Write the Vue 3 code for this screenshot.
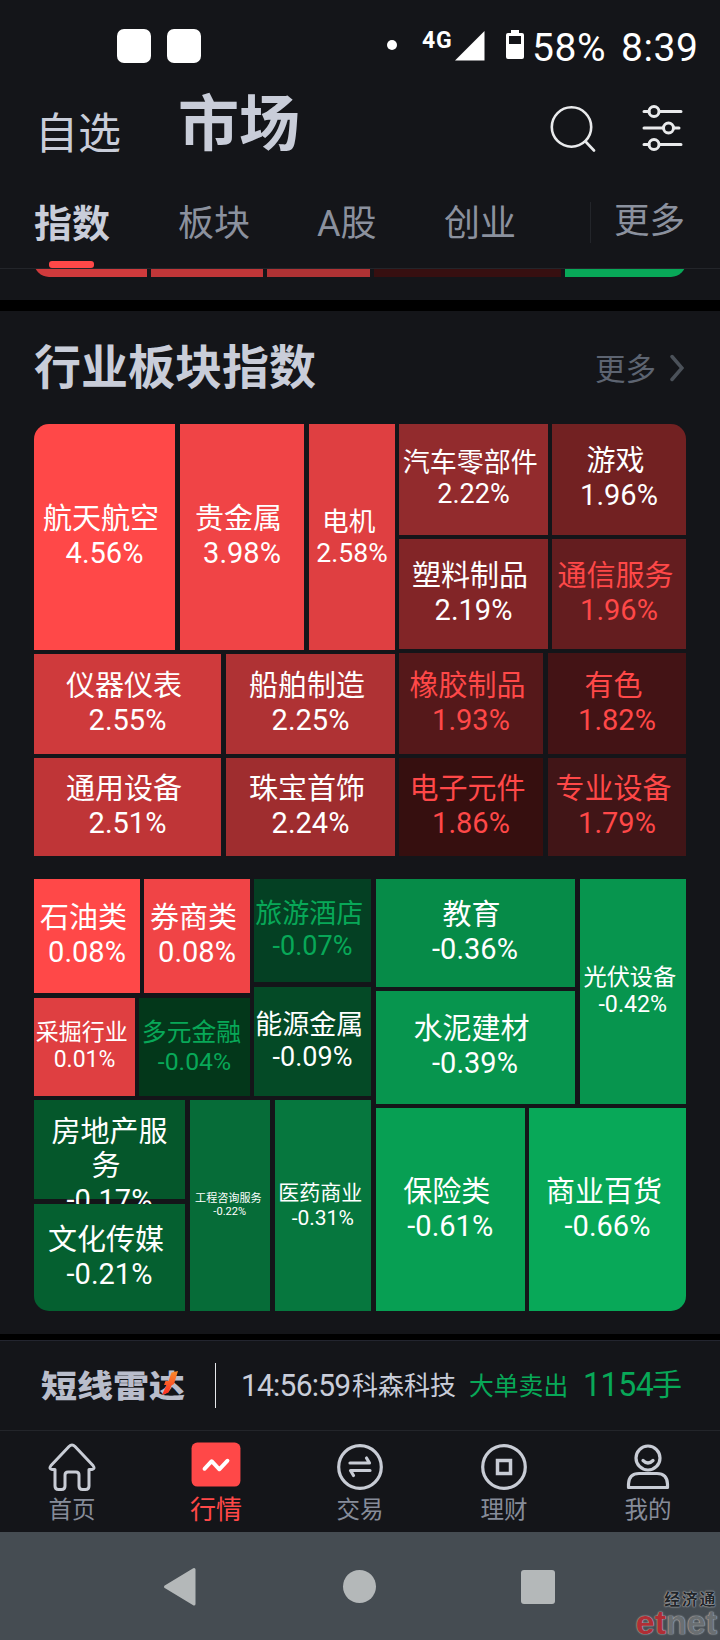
<template>
  <div class="screen">
    <div class="status">
      <span class="notice"></span>
      <span class="notice"></span>
      <span class="dot"></span>
      <span class="net">4G</span>
      <svg class="signal" width="30" height="30" viewBox="0 0 30 30">
        <path d="M29.500 0V29.500H0z" fill="#fff" />
      </svg>
      <svg class="battery" width="18" height="30" viewBox="0 0 18 30">
        <path
          fill="#fff"
          fill-rule="evenodd"
          d="M5 0h8v3h3a2 2 0 0 1 2 2v22a2 2 0 0 1-2 2H2a2 2 0 0 1-2-2V5a2 2 0 0 1 2-2h3zM3 6v8h12V6z"
        />
      </svg>
      <span class="power">58%</span>
      <span class="clock">8:39</span>
    </div>

    <header class="header">
      <span class="page">自选</span>
      <span class="page page-active">市场</span>
      <svg class="search" width="48" height="48" viewBox="0 0 48 48">
        <g fill="none" stroke="#e9eaec" stroke-width="2.600" stroke-linecap="round">
          <circle cx="22.500" cy="23" r="19.700" />
          <path d="M36.500 37.500L45 46.500" />
        </g>
      </svg>
      <svg class="filter" width="42" height="48" viewBox="0 0 42 48">
        <g fill="none" stroke="#e9eaec" stroke-width="3" stroke-linecap="round">
          <path d="M2 7.500h5M18 7.500h21M2 24h19.500M32.500 24h4.500M2 40.500h5M18 40.500h21" />
          <circle cx="12" cy="7.500" r="5" />
          <circle cx="26.500" cy="24" r="5" />
          <circle cx="12" cy="40.500" r="5" />
        </g>
      </svg>
    </header>

    <nav class="tabs">
      <span class="tab tab-active">指数</span>
      <span class="tab">板块</span>
      <span class="tab">A股</span>
      <span class="tab">创业</span>
      <span class="tab tab-more">更多</span>
    </nav>

    <div class="strip">
      <div class="strip-inner">
        <span v-for="(s, i) in strip" :key="i" :style="{ width: s.w + 'px', background: s.bg }"></span>
      </div>
    </div>

    <section class="sector">
      <div class="sector-head">
        <h2>行业板块指数</h2>
        <span class="more">更多</span>
        <svg width="14" height="28" viewBox="0 0 14 28">
          <path d="M2 2.500L12 14L2 25.500" fill="none" stroke="#4b5159" stroke-width="3.500" stroke-linecap="round" />
        </svg>
      </div>
      <TreeNode class="map map-up" :node="rising" />
      <TreeNode class="map map-down" :node="falling" />
    </section>

    <div class="radar">
      <div class="radar-logo">
        <span>短线雷达</span>
        <svg width="18" height="25" viewBox="0 0 18 25">
          <defs>
            <linearGradient id="flash" x1="0" y1="0" x2="0" y2="1">
              <stop offset="0" stop-color="#f98d2b" />
              <stop offset="1" stop-color="#ff2a24" />
            </linearGradient>
          </defs>
          <path d="M10.500 1.500L17 0L13 13L10.500 14.500L7.500 21.500L1 24L5.500 14H3L4.500 10H7.500z" fill="url(#flash)" />
        </svg>
      </div>
      <span class="radar-line"></span>
      <span class="radar-time">14:56:59</span>
      <span class="radar-stock">科森科技</span>
      <span class="radar-type">大单卖出</span>
      <span class="radar-num">1154</span>
      <span class="radar-unit">手</span>
    </div>

    <nav class="tabbar">
      <div class="item">
        <svg width="48" height="48" viewBox="0 0 48 48">
          <path
            d="M21 3.500Q24 .5 27 3.500L45 22.500Q47.500 26 44 26.500H41V43Q41 46.500 37.500 46.500H34.500Q31 46.500 31 43V32Q31 29 28 29H20Q17 29 17 32V43Q17 46.500 13.500 46.500H10.500Q7 46.500 7 43V26.500H4Q.5 26 3 22.500z"
            fill="none"
            stroke="#c8ccd5"
            stroke-width="3"
            stroke-linejoin="round"
          />
        </svg>
        <span>首页</span>
      </div>
      <div class="item item-active">
        <svg width="52" height="48" viewBox="0 0 52 48">
          <rect x=".5" y="0.500" width="51" height="46" rx="6" fill="#ff4848" />
          <path d="M14 28L21.500 20L29.500 28.500L38 19.500" fill="none" stroke="#fff" stroke-width="4" stroke-linecap="round" stroke-linejoin="round" />
        </svg>
        <span>行情</span>
      </div>
      <div class="item">
        <svg width="48" height="48" viewBox="0 0 48 48">
          <g fill="none" stroke="#c8ccd5" stroke-width="3.200">
            <circle cx="24" cy="24" r="21.300" />
            <path d="M14 20H33.500L30.500 15M34 27.500H14.500L17.500 32.500" stroke-linecap="round" stroke-linejoin="round" />
          </g>
        </svg>
        <span>交易</span>
      </div>
      <div class="item">
        <svg width="48" height="48" viewBox="0 0 48 48">
          <g fill="none" stroke="#c8ccd5" stroke-width="3.200">
            <circle cx="24" cy="24" r="21.300" />
            <rect x="17.500" y="17.500" width="13" height="13" stroke-width="3.500" />
          </g>
        </svg>
        <span>理财</span>
      </div>
      <div class="item">
        <svg width="48" height="48" viewBox="0 0 48 48">
          <g fill="none" stroke="#c8ccd5" stroke-width="3.200">
            <circle cx="24" cy="15" r="12" />
            <path d="M19 17.500Q24 22.500 29 17.500" stroke-linecap="round" />
            <path d="M4.500 44.500V41Q5 30.500 15 30.500H33Q43 30.500 43.500 41V44.500z" stroke-linejoin="round" />
          </g>
        </svg>
        <span>我的</span>
      </div>
    </nav>

    <footer class="sysbar">
      <svg width="34" height="40" viewBox="0 0 34 40">
        <path d="M31 2.500V37L2.500 19.700z" fill="#b4b8b9" stroke="#b4b8b9" stroke-width="3" stroke-linejoin="round" />
      </svg>
      <span class="sys-home"></span>
      <span class="sys-recent"></span>
      <div class="mark">
        <div class="mark-cn">经济通</div>
        <div class="mark-en"><b>et</b>net</div>
      </div>
    </footer>
  </div>
</template>

<script setup>
import { h } from 'vue'

const strip = [
  { w: 113, bg: '#cf3a3c' },
  { w: 112, bg: '#c03638' },
  { w: 103, bg: '#af3234' },
  { w: 187, bg: '#370f10' },
  { w: 121, bg: '#08a858' },
]

const tile = (size, name, rate, bg, font = 29, color = '#fff') => ({ size, name, rate, bg, font, color })
const row = (size, ...items) => ({ size, dir: 'row', items })
const col = (size, ...items) => ({ size, dir: 'column', items })

const RED = '#ff4848'
const GREEN = '#08a858'

const rising = row(
  432,
  col(
    361,
    row(226, tile(141, '航天航空', '4.56%', '#ff4848'), tile(124.5, '贵金属', '3.98%', '#f04446'), tile(86, '电机', '2.58%', '#df3f41', 26.6)),
    row(99.5, tile(187, '仪器仪表', '2.55%', '#cf3a3c'), tile(169, '船舶制造', '2.25%', '#af3234')),
    row(98, tile(187, '通用设备', '2.51%', '#bf3537'), tile(169, '珠宝首饰', '2.24%', '#9f2d2f')),
  ),
  col(
    287,
    row(110.5, tile(149, '汽车零部件', '2.22%', '#922b2d', 27), tile(134, '游戏', '1.96%', '#722122')),
    row(110, tile(149, '塑料制品', '2.19%', '#822527'), tile(134, '通信服务', '1.96%', '#641d1f', 29, RED)),
    row(100.5, tile(144, '橡胶制品', '1.93%', '#55181a', 29, RED), tile(138, '有色', '1.82%', '#431315', 29, RED)),
    row(98, tile(144, '电子元件', '1.86%', '#360f0f', 29, RED), tile(138, '专业设备', '1.79%', '#411517', 29, RED)),
  ),
)

const falling = row(
  432,
  col(
    337,
    row(
      217,
      col(
        216,
        row(114, tile(106, '石油类', '0.08%', '#ff4848'), tile(106, '券商类', '0.08%', '#f04446')),
        row(98, tile(101, '采掘行业', '0.01%', '#df3f41', 23), tile(111, '多元金融', '-0.04%', '#03371a', 24.8, GREEN)),
      ),
      col(117, tile(103, '旅游酒店', '-0.07%', '#044023', 27, GREEN), tile(109, '能源金属', '-0.09%', '#044a26', 27)),
    ),
    row(
      211,
      col(151, tile(99, '房地产服务', '-0.17%', '#05572b'), tile(107, '文化传媒', '-0.21%', '#056030')),
      tile(80.5, '工程咨询服务', '-0.22%', '#066c38', 11.1),
      tile(96.5, '医药商业', '-0.31%', '#06773e', 21),
    ),
  ),
  col(
    310.5,
    row(
      224.5,
      col(199, tile(107.5, '教育', '-0.36%', '#068b48'), tile(112.5, '水泥建材', '-0.39%', '#07954e')),
      tile(106.5, '光伏设备', '-0.42%', '#07954e', 23.2),
    ),
    row(203, tile(149.5, '保险类', '-0.61%', '#079f53'), tile(157, '商业百货', '-0.66%', '#08a858')),
  ),
)

// a node is either a tile or a row/column of further nodes
const TreeNode = ({ node }) => {
  if (node.items) {
    return h(
      'div',
      { class: 'tree-group', style: { flexBasis: node.size + 'px', flexDirection: node.dir } },
      node.items.map((item) => h(TreeNode, { node: item })),
    )
  }
  return h('div', { class: 'tree-tile', style: { flexBasis: node.size + 'px', background: node.bg } }, [
    h('div', { class: 'tree-label', style: { fontSize: node.font + 'px', color: node.color } }, [
      h('div', node.name + '\u00a0'),
      h('div', node.rate),
    ]),
  ])
}
TreeNode.props = ['node']
</script>

<style>
body {
  background: #141519;
}

.tree-group {
  display: flex;
  flex-grow: 0;
  flex-shrink: 0;
  justify-content: space-between;
}

.tree-tile {
  display: flex;
  flex-grow: 0;
  flex-shrink: 0;
  align-items: center;
  justify-content: center;
}

.tree-label {
  width: 100%;
  height: 2.33em;
  line-height: 1.17;
  text-align: center;
}
</style>

<style scoped>
.screen {
  width: 720px;
  height: 1640px;
  overflow: hidden;
  display: flex;
  flex-direction: column;
  background: #141519;
  color: #c9cdd9;
  font-family: Roboto, 'Noto Sans CJK SC', sans-serif;
}

.status {
  display: flex;
  align-items: flex-start;
  height: 88px;
  padding-left: 117px;
  box-sizing: border-box;
  color: #fff;
  white-space: nowrap;
}

.notice {
  width: 34px;
  height: 34px;
  margin: 29px 16px 0 0;
  border-radius: 7px;
  background: #fff;
}

.dot {
  width: 10px;
  height: 10px;
  margin: 40px 0 0 170px;
  border-radius: 50%;
  background: #fff;
}

.net {
  width: 33px;
  margin: 27px 0 0 25px;
  font-size: 23px;
  line-height: 28px;
  font-weight: 700;
  letter-spacing: 0.8px;
}

.signal {
  margin-top: 31px;
}

.battery {
  margin: 30px 0 0 21px;
}

.power,
.clock {
  margin-top: 25px;
  font-size: 39px;
  line-height: 46px;
  letter-spacing: 0.6px;
}

.power {
  width: 89px;
  margin-left: 8px;
}

.header {
  display: flex;
  align-items: flex-start;
  height: 92px;
  padding-left: 35px;
}

.page {
  width: 143px;
  margin-top: 14px;
  font-size: 43px;
  line-height: 64px;
}

.page-active {
  width: 371px;
  margin-top: 2px;
  font-size: 61px;
  line-height: 70px;
  font-weight: 700;
}

.search {
  margin-top: 16px;
}

.filter {
  margin: 16px 0 0 45px;
}

.tabs {
  display: flex;
  height: 88px;
  padding-left: 34px;
  border-bottom: 1px solid #23252a;
  color: #8b919e;
}

.tab {
  position: relative;
  width: 144px;
  font-size: 36px;
  line-height: 88px;
}

.tab:nth-child(3) {
  width: 127px;
  margin-left: -5px;
}

.tab-active {
  color: #c9cdd9;
  font-size: 38px;
  font-weight: 700;
}

.tab-active::after {
  content: '';
  position: absolute;
  left: 15px;
  bottom: 0;
  width: 45px;
  height: 7px;
  border-radius: 3px;
  background: #ff4848;
}

.tab-more {
  width: auto;
  margin-left: 2px;
  padding-left: 24px;
  line-height: 83px;
  font-size: 35.5px;
  background: linear-gradient(#23252a, #23252a) 0 22px / 1px 41px no-repeat;
}

.strip {
  display: flex;
  align-items: flex-end;
  height: 8px;
  width: 652px;
  margin-left: 34px;
  overflow: hidden;
}

.strip-inner {
  display: flex;
  flex: 1;
  justify-content: space-between;
  height: 30px;
  border-radius: 0 0 15px 15px;
  overflow: hidden;
}

.sector {
  margin-top: 23px;
  padding: 0 34px 23px;
  border-top: 11px solid #000;
  border-bottom: 6px solid #000;
}

.sector-head {
  display: flex;
  align-items: center;
  height: 113px;
}

.sector-head h2 {
  margin: 1px 0 0;
  width: 561px;
  font-size: 47px;
  line-height: 60px;
  font-weight: 700;
}

.more {
  width: 75px;
  margin-bottom: 2px;
  color: #5d6471;
  font-size: 30.5px;
}

.map {
  width: 652px;
  height: 432px;
  overflow: hidden;
}

.map-up {
  border-radius: 15px 15px 0 0;
}

.map-down {
  margin-top: 23px;
  border-radius: 0 0 15px 15px;
}

.radar {
  display: flex;
  align-items: center;
  height: 89px;
  padding-left: 41px;
  border-top: 1px solid #23252f;
  border-bottom: 1px solid #23252a;
  flex: none;
  white-space: nowrap;
}

.radar-logo {
  position: relative;
  width: 174px;
  margin-top: 2px;
  font-size: 36px;
  line-height: 40px;
  font-weight: 900;
  color: #b9bdcb;
}

.radar-logo span {
  display: block;
  transform: scaleY(0.86);
}

.radar-logo svg {
  position: absolute;
  left: 120px;
  top: 4px;
}

.radar-line {
  width: 1px;
  height: 45px;
  background: #e6e7ea;
}

.radar-time {
  width: 111px;
  margin: 0 0 2px 25px;
  font-size: 30px;
  letter-spacing: -0.8px;
  transform: scaleY(1.06);
}

.radar-stock {
  width: 117px;
  margin-bottom: 4px;
  font-size: 26px;
}

.radar-type {
  width: 114px;
  margin-bottom: 3px;
  font-size: 24.8px;
  color: #08a858;
}

.radar-num {
  width: 69px;
  margin-bottom: 3px;
  font-size: 32px;
  letter-spacing: -0.4px;
  color: #08a858;
  transform: scaleY(1.06);
}

.radar-unit {
  margin-bottom: 7px;
  font-size: 30px;
  color: #08a858;
}

.tabbar {
  display: flex;
  flex: none;
  height: 101px;
  color: #868c99;
}

.item {
  display: flex;
  flex: 1;
  flex-direction: column;
  align-items: center;
  padding-top: 12px;
  font-size: 23.5px;
  line-height: 36px;
}

.item svg {
  margin-bottom: 1px;
}

.item-active {
  padding-top: 11px;
  font-size: 26px;
  line-height: 43px;
  color: #ff4848;
}

.sysbar {
  position: relative;
  display: flex;
  align-items: flex-start;
  flex: 1;
  padding-left: 163px;
  background: #454c52;
}

.sysbar > svg {
  margin-top: 35px;
}

.sys-home {
  width: 33px;
  height: 33px;
  margin: 38px 0 0 146px;
  border-radius: 50%;
  background: #b4b8b9;
}

.sys-recent {
  width: 34px;
  height: 34px;
  margin: 38px 0 0 145px;
  border-radius: 3px;
  background: #b4b8b9;
}

.mark {
  position: absolute;
  right: 3px;
  bottom: 0;
  display: flex;
  flex-direction: column;
  align-items: flex-end;
}

.mark-cn {
  font-size: 16px;
  line-height: 18px;
  letter-spacing: 1.6px;
  color: #22262a;
  font-weight: 700;
  text-shadow: 0 0 1px #c5c8ca, 0 0 2px #c5c8ca;
}

.mark-en {
  padding-bottom: 1px;
  font-family: 'Liberation Sans', sans-serif;
  font-size: 34px;
  line-height: 27px;
  height: 30px;
  font-weight: 700;
  color: #6a6f72;
  text-shadow: 0 0 1px #b9bcbe, 0 0 2px #b9bcbe;
}

.mark-en b {
  color: #b02e35;
}
</style>
